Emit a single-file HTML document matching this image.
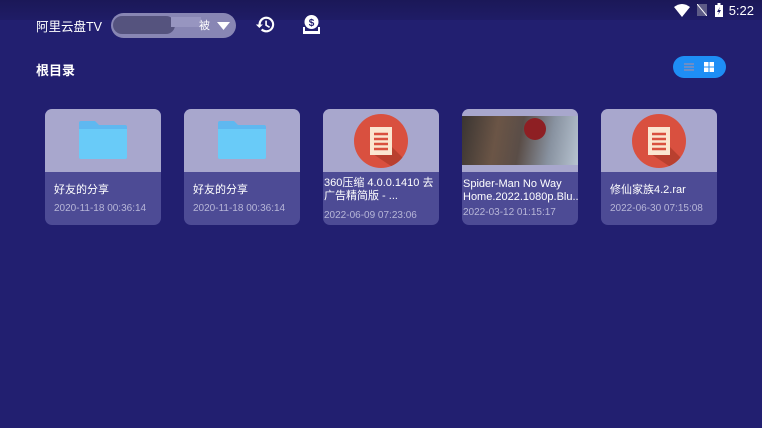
<!DOCTYPE html>
<html><head><meta charset="utf-8"><style>
*{margin:0;padding:0;box-sizing:border-box}
body{width:762px;height:428px;overflow:hidden;background:#221f70;font-family:"Liberation Sans","Noto Sans CJK SC",sans-serif;color:#fff;position:relative}
.sb{position:absolute;left:0;top:0;width:762px;height:20px;background:linear-gradient(#1b1858,#1f1c66)}
.time{position:absolute;right:8px;top:3px;font-size:13px}
.t{position:absolute;font-size:12.5px}
.card{position:absolute;top:109px;width:116px;height:116px;border-radius:7px;overflow:hidden;background:#4d4b95}
.card .top{height:63px;background:#a8a7cd;position:relative}
.card .n{position:absolute;left:9px;font-size:11px;color:#fff;line-height:13px}
.card .d{position:absolute;left:9px;font-size:10px;color:#b7b6d8}
.folder{position:absolute;left:34px;top:12px;width:48px;height:38px}
.doc{position:absolute;left:31px;top:5px;width:54px;height:54px;border-radius:50%;background:#d9503f;overflow:hidden}
</style></head><body>
<div class="sb"></div>
<svg style="position:absolute;left:674px;top:4px" width="16" height="13" viewBox="0 0 16 13"><path d="M0 3 Q8 -3 16 3 L8 13Z" fill="#fff"/></svg>
<svg style="position:absolute;left:697px;top:4px" width="10" height="12"><path d="M0 0H10V12H0Z" fill="#5d5b86"/><path d="M0 0L10 12" stroke="#fff" stroke-width="1"/></svg>
<svg style="position:absolute;left:715px;top:3px" width="8" height="14"><rect x="0" y="2" width="8" height="12" fill="#fff"/><rect x="2.5" y="0" width="3" height="2" fill="#fff"/><path d="M5 4L2 9H4L3 12L6 7H4Z" fill="#1f1c66"/></svg>
<div class="time">5:22</div>

<div class="t" style="left:36px;top:16px">阿里云盘TV</div>
<div style="position:absolute;left:111px;top:13px;width:125px;height:25px;border-radius:13px;background:#8886b4;overflow:hidden">
 <div style="position:absolute;left:2px;top:3px;width:62px;height:18px;background:#55537e;border-radius:9px"></div>
 <div style="position:absolute;left:60px;top:4px;width:30px;height:10px;background:#9795c0"></div>
 <div style="position:absolute;left:88px;top:4px;font-size:11px">被</div>
 <svg style="position:absolute;left:106px;top:9px" width="13" height="8"><path d="M0 0H13L6.5 8Z" fill="#fff"/></svg>
</div>
<svg style="position:absolute;left:255px;top:14px" width="21" height="21" viewBox="0 0 24 24"><path d="M13 3a9 9 0 0 0-9 9H1l4 4 4-4H6.5a6.5 6.5 0 1 1 2 4.7l-1.8 1.8A9 9 0 1 0 13 3zm-1.3 4.5v5.8l4.5 2.7 1-1.6-3.6-2.1V7.5z" fill="#fff"/></svg>
<svg style="position:absolute;left:302px;top:14px" width="19" height="21" viewBox="0 0 19 21"><circle cx="9.5" cy="8" r="7" fill="#fff"/><text x="9.5" y="12" font-size="10" font-weight="bold" text-anchor="middle" fill="#221f70" font-family="Liberation Sans">$</text><path d="M1 13V20H18V13H16V17H3V13Z" fill="#fff"/></svg>

<div class="t" style="left:36px;top:60px;font-weight:bold;font-size:13px">根目录</div>
<div style="position:absolute;left:673px;top:56px;width:53px;height:22px;border-radius:11px;background:#1e8ef5">
 <div style="position:absolute;left:11px;top:7px;width:10px;height:2px;background:#6a8ec8;box-shadow:0 3px #6a8ec8,0 6px #6a8ec8"></div>
 <div style="position:absolute;left:31px;top:6px;width:10px;height:10px;background:linear-gradient(90deg,transparent 4.5px,#1e8ef5 4.5px,#1e8ef5 5.5px,transparent 5.5px),linear-gradient(transparent 4.5px,#1e8ef5 4.5px,#1e8ef5 5.5px,transparent 5.5px),#fff"></div>
</div>

<div class="card" style="left:45px"><div class="top"><svg class="folder" viewBox="0 0 48 38"><path d="M0 2Q0 0 2 0H16L20 4H46Q48 4 48 6V36Q48 38 46 38H2Q0 38 0 36Z" fill="#5fb8f0"/><path d="M0 8H48V36Q48 38 46 38H2Q0 38 0 36Z" fill="#69cbf8"/></svg></div>
<div class="n" style="top:75px">好友的分享</div><div class="d" style="top:94px">2020-11-18 00:36:14</div></div>
<div class="card" style="left:184px"><div class="top"><svg class="folder" viewBox="0 0 48 38"><path d="M0 2Q0 0 2 0H16L20 4H46Q48 4 48 6V36Q48 38 46 38H2Q0 38 0 36Z" fill="#5fb8f0"/><path d="M0 8H48V36Q48 38 46 38H2Q0 38 0 36Z" fill="#69cbf8"/></svg></div>
<div class="n" style="top:75px">好友的分享</div><div class="d" style="top:94px">2020-11-18 00:36:14</div></div>
<div class="card" style="left:323px"><div class="top"><div class="doc"><svg width="54" height="54"><path d="M19 14L54 49V54H40L19 40Z" fill="#b9402f"/><path d="M16 13H38V41H16Z" fill="#fbe6d0"/><path d="M20 20H34M20 25H34M20 30H34M20 35H34" stroke="#d9503f" stroke-width="2.5"/></svg></div></div>
<div class="n" style="top:68px;left:1px">360压缩 4.0.0.1410 去<br>广告精简版 - ...</div><div class="d" style="top:101px;left:1px">2022-06-09 07:23:06</div></div>
<div class="card" style="left:462px"><div class="top"><div style="position:absolute;left:0;top:7px;width:116px;height:49px;background:linear-gradient(100deg,#3a3532 0%,#6b5546 30%,#5a4d47 50%,#8892a0 75%,#b7c3d0 100%)"><div style="position:absolute;left:62px;top:2px;width:22px;height:22px;border-radius:50%;background:#8e1f23"></div></div></div>
<div class="n" style="top:69px;left:1px">Spider-Man No Way<br>Home.2022.1080p.Blu...</div><div class="d" style="top:98px;left:1px">2022-03-12 01:15:17</div></div>
<div class="card" style="left:601px"><div class="top"><div class="doc"><svg width="54" height="54"><path d="M19 14L54 49V54H40L19 40Z" fill="#b9402f"/><path d="M16 13H38V41H16Z" fill="#fbe6d0"/><path d="M20 20H34M20 25H34M20 30H34M20 35H34" stroke="#d9503f" stroke-width="2.5"/></svg></div></div>
<div class="n" style="top:75px">修仙家族4.2.rar</div><div class="d" style="top:94px">2022-06-30 07:15:08</div></div>
</body></html>
